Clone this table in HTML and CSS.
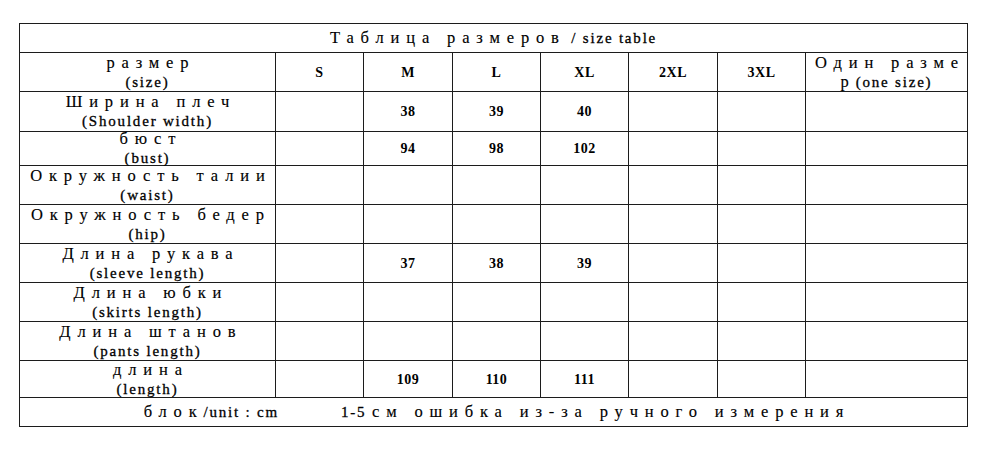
FILE: index.html
```html
<!DOCTYPE html>
<html lang="ru">
<head>
<meta charset="utf-8">
<title>Таблица размеров</title>
<link rel="stylesheet" href="styles.css">
</head>
<body>
<div class="sheet">
  <div class="cell span title"><div class="line"><span class="ru">Таблица размеров</span><span class="en"> / size table</span></div></div>

  <div class="cell"><div class="line"><span class="ru">размер</span></div><div class="line"><span class="en">(size)</span></div></div>
  <div class="cell"><span class="num">S</span></div>
  <div class="cell"><span class="num">M</span></div>
  <div class="cell"><span class="num">L</span></div>
  <div class="cell"><span class="num">XL</span></div>
  <div class="cell"><span class="num">2XL</span></div>
  <div class="cell"><span class="num">3XL</span></div>
  <div class="cell"><div class="line"><span class="ru">Один разме</span></div><div class="line"><span class="ru">р</span><span class="en">(one size)</span></div></div>

  <div class="cell"><div class="line"><span class="ru">Ширина плеч</span></div><div class="line"><span class="en">(Shoulder width)</span></div></div>
  <div class="cell"></div>
  <div class="cell"><span class="num">38</span></div>
  <div class="cell"><span class="num">39</span></div>
  <div class="cell"><span class="num">40</span></div>
  <div class="cell"></div>
  <div class="cell"></div>
  <div class="cell"></div>

  <div class="cell"><div class="line"><span class="ru">бюст</span></div><div class="line"><span class="en">(bust)</span></div></div>
  <div class="cell"></div>
  <div class="cell"><span class="num">94</span></div>
  <div class="cell"><span class="num">98</span></div>
  <div class="cell"><span class="num">102</span></div>
  <div class="cell"></div>
  <div class="cell"></div>
  <div class="cell"></div>

  <div class="cell"><div class="line"><span class="ru">Окружность талии</span></div><div class="line"><span class="en">(waist)</span></div></div>
  <div class="cell"></div>
  <div class="cell"></div>
  <div class="cell"></div>
  <div class="cell"></div>
  <div class="cell"></div>
  <div class="cell"></div>
  <div class="cell"></div>

  <div class="cell"><div class="line"><span class="ru">Окружность бедер</span></div><div class="line"><span class="en">(hip)</span></div></div>
  <div class="cell"></div>
  <div class="cell"></div>
  <div class="cell"></div>
  <div class="cell"></div>
  <div class="cell"></div>
  <div class="cell"></div>
  <div class="cell"></div>

  <div class="cell"><div class="line"><span class="ru">Длина рукава</span></div><div class="line"><span class="en">(sleeve length)</span></div></div>
  <div class="cell"></div>
  <div class="cell"><span class="num">37</span></div>
  <div class="cell"><span class="num">38</span></div>
  <div class="cell"><span class="num">39</span></div>
  <div class="cell"></div>
  <div class="cell"></div>
  <div class="cell"></div>

  <div class="cell"><div class="line"><span class="ru">Длина юбки</span></div><div class="line"><span class="en">(skirts length)</span></div></div>
  <div class="cell"></div>
  <div class="cell"></div>
  <div class="cell"></div>
  <div class="cell"></div>
  <div class="cell"></div>
  <div class="cell"></div>
  <div class="cell"></div>

  <div class="cell"><div class="line"><span class="ru">Длина штанов</span></div><div class="line"><span class="en">(pants length)</span></div></div>
  <div class="cell"></div>
  <div class="cell"></div>
  <div class="cell"></div>
  <div class="cell"></div>
  <div class="cell"></div>
  <div class="cell"></div>
  <div class="cell"></div>

  <div class="cell"><div class="line"><span class="ru">длина</span></div><div class="line"><span class="en">(length)</span></div></div>
  <div class="cell"></div>
  <div class="cell"><span class="num">109</span></div>
  <div class="cell"><span class="num">110</span></div>
  <div class="cell"><span class="num">111</span></div>
  <div class="cell"></div>
  <div class="cell"></div>
  <div class="cell"></div>

  <div class="cell span foot"><div class="line"><span class="ru">блок</span><span class="en">/unit : cm</span><span class="gap"></span><span class="en">1-5 </span><span class="ru">см ошибка из-за ручного измерения</span></div></div>
</div>
</body>
</html>
```

FILE: styles.css
```css
body {
  margin: 0;
  background: #fff;
  font-family: "Liberation Serif", "DejaVu Serif", serif;
  color: #000;
}

.sheet {
  box-sizing: border-box;
  margin: 23px 0 0 19px;
  width: 949px;
  display: grid;
  grid-template-columns: 255px 87px 88px 87px 87px 88px 87px 161px;
  grid-template-rows: 28px 38px 39px 33px 38px 38px 38px 38px 38px 36px 28px;
  gap: 1px;
  padding: 1px;
  background: #1c1c1c;
}

.cell {
  background: #fff;
  display: flex;
  flex-direction: column;
  align-items: center;
  justify-content: center;
  text-align: center;
  line-height: 19px;
  overflow: visible;
}

.span {
  grid-column: 1 / -1;
}

.line {
  white-space: pre;
}

.ru {
  font-size: 16.5px;
  letter-spacing: 6.85px;
  -webkit-text-stroke: 0.15px #000;
}

.ru:last-child {
  margin-right: -6.85px;
}

.en {
  font-size: 15px;
  letter-spacing: 1.8px;
  -webkit-text-stroke: 0.3px #000;
}

.num {
  font-size: 14px;
  font-weight: bold;
  letter-spacing: 0.5px;
}

.gap {
  display: inline-block;
  width: 62px;
}
```
